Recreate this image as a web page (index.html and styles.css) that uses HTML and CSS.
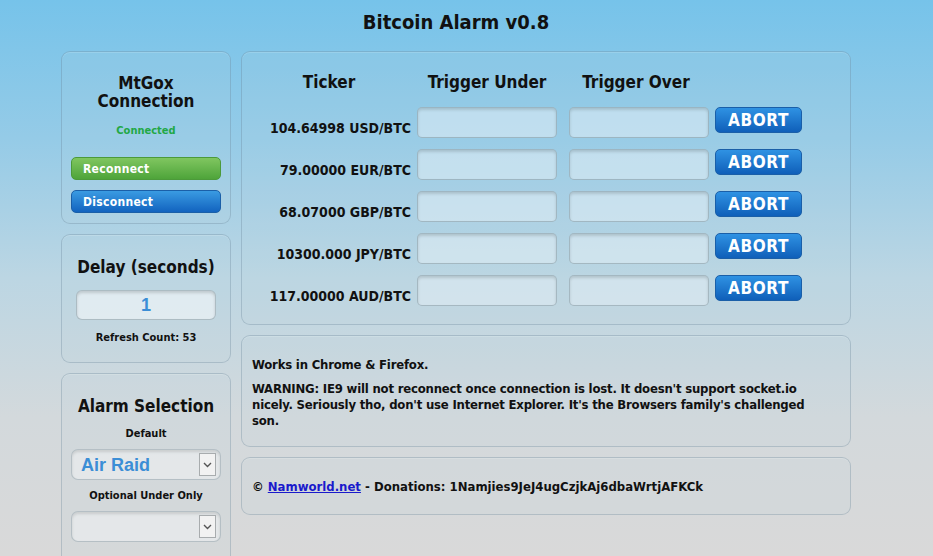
FILE: index.html
```html
<!DOCTYPE html>
<html lang="en">
<head>
    <meta charset="UTF-8">
    <title>Bitcoin Alarm v0.8</title>
    <link rel="stylesheet" href="styles.css">
</head>
<body>
    <h1 class="title">Bitcoin Alarm v0.8</h1>

    <div class="layout">
        <div class="side">
            <div class="panel conn">
                <h2>MtGox Connection</h2>
                <div class="status">Connected</div>
                <button class="btn green">Reconnect</button>
                <button class="btn blue">Disconnect</button>
            </div>

            <div class="panel delay">
                <h2>Delay (seconds)</h2>
                <input type="text" class="delay-input" value="1">
                <div class="small">Refresh Count: 53</div>
            </div>

            <div class="panel alarm">
                <h2>Alarm Selection</h2>
                <div class="small first">Default</div>
                <div class="select">
                    <select><option>Air Raid</option></select>
                    <span class="arrow"><svg width="9" height="6" viewBox="0 0 9 6"><path d="M1 1 L4.5 4.5 L8 1" fill="none" stroke="#555" stroke-width="1.4"/></svg></span>
                </div>
                <div class="small">Optional Under Only</div>
                <div class="select">
                    <select><option></option></select>
                    <span class="arrow"><svg width="9" height="6" viewBox="0 0 9 6"><path d="M1 1 L4.5 4.5 L8 1" fill="none" stroke="#555" stroke-width="1.4"/></svg></span>
                </div>
            </div>
        </div>

        <div class="main">
            <div class="panel ticker">
                <div class="head">Ticker</div>
                <div class="head">Trigger Under</div>
                <div class="head">Trigger Over</div>
                <div></div>

                <div class="label">104.64998 USD/BTC</div>
                <input type="text" class="trig">
                <input type="text" class="trig over">
                <button class="abort">ABORT</button>

                <div class="label">79.00000 EUR/BTC</div>
                <input type="text" class="trig">
                <input type="text" class="trig over">
                <button class="abort">ABORT</button>

                <div class="label">68.07000 GBP/BTC</div>
                <input type="text" class="trig">
                <input type="text" class="trig over">
                <button class="abort">ABORT</button>

                <div class="label">10300.000 JPY/BTC</div>
                <input type="text" class="trig">
                <input type="text" class="trig over">
                <button class="abort">ABORT</button>

                <div class="label">117.00000 AUD/BTC</div>
                <input type="text" class="trig">
                <input type="text" class="trig over">
                <button class="abort">ABORT</button>
            </div>

            <div class="panel notes">
                <p>Works in Chrome &amp; Firefox.</p>
                <p>WARNING: IE9 will not reconnect once connection is lost. It doesn't support socket.io nicely. Seriously tho, don't use Internet Explorer. It's the Browsers family's challenged son.</p>
            </div>

            <div class="panel foot">
                &copy; <a href="#">Namworld.net</a> - Donations: 1Namjies9JeJ4ugCzjkAj6dbaWrtjAFKCk
            </div>
        </div>
    </div>
</body>
</html>
```

FILE: styles.css
```css
html { height: 100%; }
body {
    margin: 0;
    min-height: 100%;
    font-family: "DejaVu Sans Condensed", "DejaVu Sans", sans-serif;
    font-weight: bold;
    color: #111;
    background: linear-gradient(to bottom, #76c3ea 0%, #95cbe7 25%, #bcd6e3 50%, #d3d9dc 75%, #d9d9d9 100%);
    overflow: hidden;
}
.title { margin: 0; padding: 10px 0 0 61px; width: 851px; height: 51px; box-sizing: border-box; text-align: center; font-size: 20px; line-height: 24px; }

.layout { display: grid; grid-template-columns: 170px 610px; gap: 10px; margin-left: 61px; }
.side, .main { display: flex; flex-direction: column; gap: 10px; }

.panel {
    border: 1px solid rgba(90, 120, 140, 0.28);
    border-radius: 9px;
    background: rgba(190, 210, 220, 0.12);
    box-shadow: inset 0 1px 0 rgba(255, 255, 255, 0.15);
}

.side .panel { display: flex; flex-direction: column; align-items: center; }
.side h2 { margin: 0; font-size: 17px; line-height: 18px; text-align: center; }
.small { font-size: 11px; line-height: 12px; }

.conn { padding: 22px 0 10px; height: 173px; box-sizing: border-box; }
.conn h2 { width: 120px; }
.status { font-size: 11px; line-height: 12px; color: #22a845; margin-top: 15px; }
.btn {
    width: 150px; height: 24px; margin-top: 20px; padding: 0 0 0 11px;
    text-align: left; font: inherit; font-size: 12px; letter-spacing: 0.3px; color: #fff;
    border-radius: 5px; cursor: pointer;
}
.btn + .btn { margin-top: 10px; }
.green { background: linear-gradient(#80c660, #4ea43a); border: 1px solid #4c9a3a; }
.blue { background: linear-gradient(#3a9be2, #1263bf); border: 1px solid #1a5fa8; }

.delay { padding: 23px 0 0; height: 129px; box-sizing: border-box; }
.delay-input {
    width: 140px; height: 30px; box-sizing: border-box; margin: 14px 0 12px;
    text-align: center; font-family: "Liberation Sans", Arial, sans-serif; font-weight: bold; font-size: 18px; color: #3b8ed6;
    border: 1px solid rgba(110, 130, 140, 0.45); border-radius: 6px;
    background: rgba(235, 242, 246, 0.75);
    box-shadow: inset 0 2px 3px rgba(0, 0, 0, 0.15);
}

.alarm { padding: 23px 0 20px; }
.alarm .first { margin-top: 13px; }
.select { position: relative; width: 150px; height: 31px; margin: 9px 0 10px; }
.select select {
    appearance: none; width: 100%; height: 100%; padding: 0 0 0 9px;
    font-family: "Liberation Sans", Arial, sans-serif; font-weight: bold; font-size: 18px; color: #3b8ed6;
    border: 1px solid rgba(110, 130, 140, 0.4); border-radius: 7px;
    background: rgba(235, 238, 240, 0.7);
    box-shadow: inset 0 2px 3px rgba(0, 0, 0, 0.12);
}
.arrow {
    position: absolute; right: 5px; top: 4px; width: 15px; height: 21px;
    display: flex; align-items: center; justify-content: center;
    border: 1px solid #a8acae; background: #f2f2f2;
}

.ticker {
    display: grid; grid-template-columns: 164px 140px 140px 87px;
    grid-auto-rows: 38px; column-gap: 6px; row-gap: 4px;
    padding: 13px 0 15px 5px; height: 274px; box-sizing: border-box;
}
.head { font-size: 17px; text-align: center; line-height: 34px; height: 38px; }
.ticker .head:nth-child(3) { margin-left: 6px; }
.label { font-size: 14px; text-align: right; align-self: center; padding-top: 3px; }
.trig {
    width: 140px; height: 31px; box-sizing: border-box;
    border: 1px solid rgba(110, 130, 140, 0.45); border-radius: 5px;
    background: rgba(225, 238, 245, 0.55);
    box-shadow: inset 0 2px 3px rgba(0, 0, 0, 0.14);
}
.trig.over { margin-left: 6px; }
.abort {
    width: 87px; height: 26px; padding: 0; margin-left: 6px;
    font: inherit; font-size: 17px; letter-spacing: 0.6px; color: #fff;
    background: linear-gradient(#2f92e3, #0f5fb9);
    border: 1px solid #1a5fa8; border-radius: 5px; cursor: pointer;
}

.notes { padding: 21px 10px 10px; height: 112px; box-sizing: border-box; font-size: 13px; line-height: 16px; }
.notes p { margin: 0 0 8px; max-width: 560px; letter-spacing: -0.2px; }

.foot { height: 58px; box-sizing: border-box; padding: 21px 10px 0; font-size: 13px; line-height: 16px; }
.foot a { color: #1a1acc; }
```
